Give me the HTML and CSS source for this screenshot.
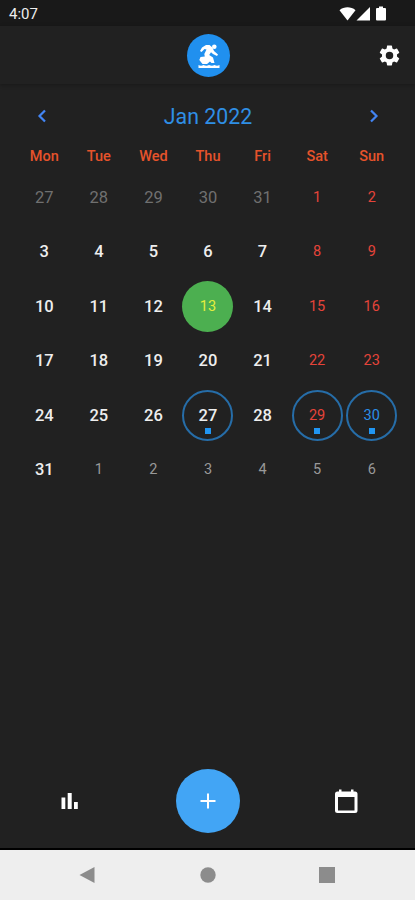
FILE: index.html
```html
<!DOCTYPE html>
<html lang="en">
<head>
  <meta charset="UTF-8" />
  <meta name="viewport" content="width=device-width, initial-scale=1.0">
  <title>Calendar</title>
  <link rel="stylesheet" href="styles.css">
</head>
<body>
  <!-- Status Bar -->
  <div class="status-bar">
    <span class="time">4:07</span>
    <svg class="status-icons" width="50" height="16" viewBox="0 0 50 16" fill="#fff">
      <path d="M.5 4.200C5 .4 12 .4 16.500 4.200L8.500 14.500Z" />
      <path d="M31 1V14.500H17.500Z" />
      <path d="M40 .5h4v1.500h2a1 1 0 0 1 1 1v10.500a1 1 0 0 1-1 1h-8a1 1 0 0 1-1-1v-10.500a1 1 0 0 1 1-1h2z" />
    </svg>
  </div>

  <!-- App Header -->
  <header>
    <div class="logo">
      <svg width="43" height="43" viewBox="0 0 43 43" fill="#fff">
        <circle cx="27.300" cy="12.800" r="2.300" />
        <path d="M15 13.500L19 11H22.500L25.500 13.500L27 17L31 20.500L30 22L26 20L24 18.200L22.200 21L26 23.500L27.500 29H24.500L23 27.500L20 30H15.500L12.300 26L13.500 23L17.800 22.500L17.300 20L19.500 15.500L17.500 15L14.500 18L13 17Z" />
        <path d="M11.500 31q2.500 1.300 5 0q3 1.300 5.500 0q3 1.300 5.500 0q2.500 1.300 5 0v3h-21z" />
      </svg>
    </div>
    <svg class="settings" width="25" height="25" viewBox="0 0 24 24" fill="#fff">
      <path d="M19.140 12.940c.04-.3.060-.610.060-.940 0-.320-.020-.640-.070-.940l2.030-1.580a.49.49 0 0 0 .12-.610l-1.920-3.320a.488.488 0 0 0-.59-.220l-2.390.960c-.5-.380-1.030-.7-1.620-.940l-.360-2.540a.484.484 0 0 0-.48-.410h-3.840c-.24 0-.430.170-.470.410l-.360 2.540c-.590.240-1.130.570-1.620.940l-2.390-.960c-.220-.080-.470 0-.590.220L2.740 8.870c-.120.210-.080.470.12.610l2.030 1.580c-.05.3-.090.630-.090.940s.02.640.070.940l-2.030 1.580a.49.49 0 0 0-.12.610l1.920 3.320c.12.220.370.290.590.220l2.390-.960c.5.380 1.030.7 1.620.940l.360 2.540c.05.240.240.410.480.410h3.840c.24 0 .440-.170.470-.410l.360-2.540c.590-.240 1.130-.560 1.620-.940l2.390.960c.220.080.470 0 .590-.220l1.920-3.320c.12-.220.070-.470-.12-.610l-2.010-1.580zM12 15.600A3.600 3.600 0 1 1 12 8.400a3.600 3.600 0 0 1 0 7.200z" />
    </svg>
  </header>

  <!-- Calendar -->
  <main>
    <div class="month">
      <svg width="12" height="16" viewBox="0 0 12 16"><path d="M9 2.500L3.500 8L9 13.500" /></svg>
      <h1>Jan 2022</h1>
      <svg width="12" height="16" viewBox="0 0 12 16"><path d="M3 2.500L8.500 8L3 13.500" /></svg>
    </div>
    <div class="weekdays">
      <span>Mon</span><span>Tue</span><span>Wed</span><span>Thu</span><span>Fri</span><span>Sat</span><span>Sun</span>
    </div>
    <div class="days">
      <span class="day prev">27</span>
      <span class="day prev">28</span>
      <span class="day prev">29</span>
      <span class="day prev">30</span>
      <span class="day prev">31</span>
      <span class="day weekend">1</span>
      <span class="day weekend">2</span>

      <span class="day">3</span>
      <span class="day">4</span>
      <span class="day">5</span>
      <span class="day">6</span>
      <span class="day">7</span>
      <span class="day weekend">8</span>
      <span class="day weekend">9</span>

      <span class="day">10</span>
      <span class="day">11</span>
      <span class="day">12</span>
      <span class="day today">13</span>
      <span class="day">14</span>
      <span class="day weekend">15</span>
      <span class="day weekend">16</span>

      <span class="day">17</span>
      <span class="day">18</span>
      <span class="day">19</span>
      <span class="day">20</span>
      <span class="day">21</span>
      <span class="day weekend">22</span>
      <span class="day weekend">23</span>

      <span class="day">24</span>
      <span class="day">25</span>
      <span class="day">26</span>
      <span class="day event">27</span>
      <span class="day">28</span>
      <span class="day weekend event">29</span>
      <span class="day selected event">30</span>

      <span class="day">31</span>
      <span class="day next">1</span>
      <span class="day next">2</span>
      <span class="day next">3</span>
      <span class="day next">4</span>
      <span class="day next">5</span>
      <span class="day next">6</span>
    </div>
  </main>

  <!-- Bottom Actions -->
  <div class="actions">
    <svg width="28" height="28" viewBox="0 0 28 28" fill="#fff">
      <path d="M5.500 10.500h3.800V22H5.500zM11.700 6h4v16h-4zM18 15h3.800v7H18z" />
    </svg>
    <div class="add">
      <svg width="18" height="18" viewBox="0 0 18 18"><path d="M9 1.500V16.500M1.500 9H16.500" /></svg>
    </div>
    <svg width="28" height="28" viewBox="0 0 28 28" fill="#fff">
      <path fill-rule="evenodd" d="M7 2.500H9.500v2h9.500v-2h2.500v2h1.500a2.500 2.500 0 0 1 2.500 2.500V23.500a2.500 2.500 0 0 1-2.500 2.500H5.500A2.500 2.500 0 0 1 3 23.500V7A2.500 2.500 0 0 1 5.500 4.500h1.500zM6 10V23.500h16.500V10z" />
    </svg>
  </div>

  <!-- Android Navigation -->
  <nav>
    <svg width="18" height="18" viewBox="0 0 18 18"><path d="M.5 9L15.500 1V17Z" /></svg>
    <svg width="18" height="18" viewBox="0 0 18 18"><circle cx="9" cy="9" r="7.700" /></svg>
    <svg width="18" height="18" viewBox="0 0 18 18"><path d="M1 1h16v16H1z" /></svg>
  </nav>
</body>
</html>
```
FILE: styles.css
```css
* {
  box-sizing: border-box;
}
body {
  font-family: Roboto, sans-serif;
  margin: 0;
  height: 900px;
  display: flex;
  flex-direction: column;
  overflow: hidden;
  background: #212121;
  color: #eee;
}
svg {
  display: block;
}
.status-bar {
  height: 26px;
  flex: none;
  display: flex;
  align-items: center;
  justify-content: space-between;
  padding: 2px 26px 0 9px;
  background: #191919;
}
.time {
  font-size: 15px;
}
header {
  height: 58px;
  flex: none;
  display: grid;
  grid-template-columns: 1fr 43px 1fr;
  align-items: center;
  padding-left: 1px;
  box-shadow: 0 1px 4px rgba(0,0,0,0.3);
}
.logo {
  grid-column: 2;
  border-radius: 50%;
  background: #2090ef;
}
.settings {
  justify-self: end;
  margin-right: 13px;
}
main {
  flex: 1;
  padding: 0 16px 0 17px;
}
.month {
  height: 64px;
  display: flex;
  align-items: center;
  justify-content: space-between;
  padding: 0 19px;
}
.month svg {
  fill: none;
  stroke: #4285f4;
  stroke-width: 2.2;
}
h1 {
  margin: 0;
  font-size: 21.3px;
  font-weight: 400;
  color: #2f8fe5;
}
.weekdays, .days {
  display: grid;
  grid-template-columns: repeat(7, 1fr);
  text-align: center;
}
.weekdays {
  height: 22px;
  line-height: 18px;
  font-size: 14.5px;
  font-weight: 500;
  color: #e6532b;
}
.days {
  grid-auto-rows: 54.5px;
}
.day {
  place-self: center;
  width: 51px;
  height: 51px;
  line-height: 51px;
  font-size: 16.5px;
  font-weight: 500;
}
.prev {
  font-weight: 400;
  color: #707070;
}
.next {
  font-size: 14.5px;
  font-weight: 400;
  color: #999;
}
.weekend {
  font-size: 14.5px;
  font-weight: 400;
  color: #e5443a;
}
.today {
  border-radius: 50%;
  background: #4caf50;
  font-size: 14.5px;
  font-weight: 400;
  color: #e3ee3d;
}
.selected {
  font-size: 14.5px;
  font-weight: 400;
  color: #2b8fe6;
}
.event {
  position: relative;
  border: 2px solid #266da8;
  border-radius: 50%;
  line-height: 48px;
}
/* event marker under the day number */
.event::after {
  content: "";
  position: absolute;
  left: 50%;
  bottom: 5px;
  width: 6px;
  height: 6px;
  margin-left: -3px;
  background: #2196f3;
}
.actions {
  height: 97px;
  flex: none;
  display: flex;
  justify-content: space-between;
  align-items: center;
  padding: 0 55px 0 56px;
  border-bottom: 2px solid #000;
}
.add {
  width: 64px;
  height: 64px;
  display: flex;
  align-items: center;
  justify-content: center;
  border-radius: 50%;
  background: #42a5f5;
}
.add path {
  stroke: #fff;
  stroke-width: 2;
}
nav {
  height: 50px;
  flex: none;
  display: flex;
  align-items: center;
  justify-content: space-between;
  padding: 0 79px;
  background: #eee;
}
nav svg {
  fill: #8c8c8c;
}
```
